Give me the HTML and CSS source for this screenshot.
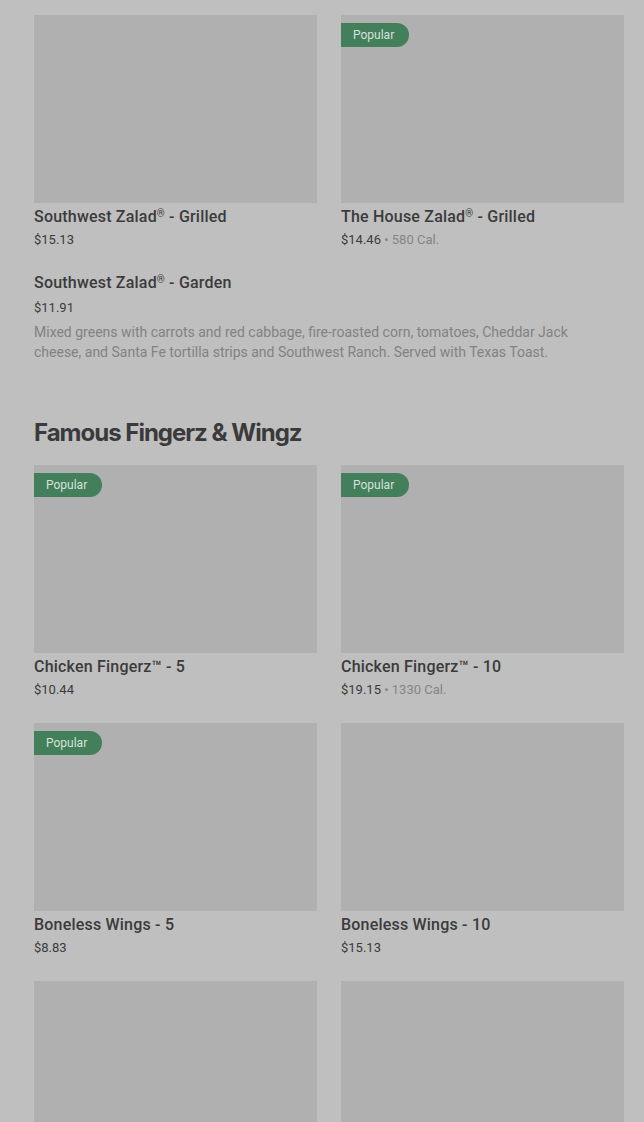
FILE: index.html
```html
<!DOCTYPE html>
<html lang="en">
<head>
  <meta charset="UTF-8">
  <meta name="viewport" content="width=device-width, initial-scale=1.0">
  <title>Menu</title>
  <link rel="stylesheet" href="styles.css">
</head>
<body>
  <div class="menu">
    <div class="grid">
      <div class="item">
        <div class="thumb"></div>
        <div class="name">Southwest Zalad<span class="reg">®</span> - Grilled</div>
        <div class="meta">$15.13</div>
      </div>
      <div class="item">
        <div class="thumb"><span class="badge">Popular</span></div>
        <div class="name">The House Zalad<span class="reg">®</span> - Grilled</div>
        <div class="meta">$14.46 <span class="cal">• 580 Cal.</span></div>
      </div>
    </div>

    <div class="plain">
      <div class="name">Southwest Zalad<span class="reg">®</span> - Garden</div>
      <div class="meta">$11.91</div>
      <p class="desc">Mixed greens with carrots and red cabbage, fire-roasted corn, tomatoes, Cheddar Jack cheese, and Santa Fe tortilla strips and Southwest Ranch. Served with Texas Toast.</p>
    </div>

    <h2>Famous Fingerz &amp; Wingz</h2>

    <div class="grid">
      <div class="item">
        <div class="thumb"><span class="badge">Popular</span></div>
        <div class="name">Chicken Fingerz™ - 5</div>
        <div class="meta">$10.44</div>
      </div>
      <div class="item">
        <div class="thumb"><span class="badge">Popular</span></div>
        <div class="name">Chicken Fingerz™ - 10</div>
        <div class="meta">$19.15 <span class="cal">• 1330 Cal.</span></div>
      </div>
      <div class="item">
        <div class="thumb"><span class="badge">Popular</span></div>
        <div class="name">Boneless Wings - 5</div>
        <div class="meta">$8.83</div>
      </div>
      <div class="item">
        <div class="thumb"></div>
        <div class="name">Boneless Wings - 10</div>
        <div class="meta">$15.13</div>
      </div>
      <div class="item">
        <div class="thumb"></div>
      </div>
      <div class="item">
        <div class="thumb"></div>
      </div>
    </div>
  </div>
</body>
</html>
```

FILE: styles.css
```css
body {
  margin: 0;
  background-color: #bfbfbf;
  font-family: Roboto, 'Liberation Sans', sans-serif;
  color: #3b3b3b;
  overflow: hidden;
}
.menu {
  padding: 15px 20px 0 34px;
}
.grid {
  display: grid;
  grid-template-columns: 283px 283px;
  column-gap: 24px;
  row-gap: 24px;
}
.thumb {
  position: relative;
  height: 188px;
  background: #b0b0b0;
}
.badge {
  position: absolute;
  top: 8px;
  left: 0;
  height: 24px;
  line-height: 24px;
  padding: 0 15px 0 12px;
  background: #437f5a;
  color: #d6e2da;
  font-size: 12px;
  border-radius: 0 12px 12px 0;
}
.name {
  margin-top: 4px;
  font-size: 16px;
  line-height: 20px;
  font-weight: 500;
  letter-spacing: 0.2px;
}
.reg {
  font-size: 10px;
  vertical-align: 5px;
  line-height: 0;
}
.meta {
  margin-top: 4px;
  font-size: 13px;
  line-height: 18px;
}
.cal {
  color: #858585;
}
.plain {
  margin-top: 24px;
}
.plain .meta {
  margin-top: 6px;
}
.desc {
  margin: 5px 0 0;
  font-size: 14px;
  line-height: 20px;
  color: #828282;
  max-width: 560px;
}
h2 {
  margin: 55px 0 16px;
  font-family: Inter, sans-serif;
  font-size: 24px;
  line-height: 32px;
  font-weight: 700;
  letter-spacing: -1px;
  color: #3a3a3a;
}
```
